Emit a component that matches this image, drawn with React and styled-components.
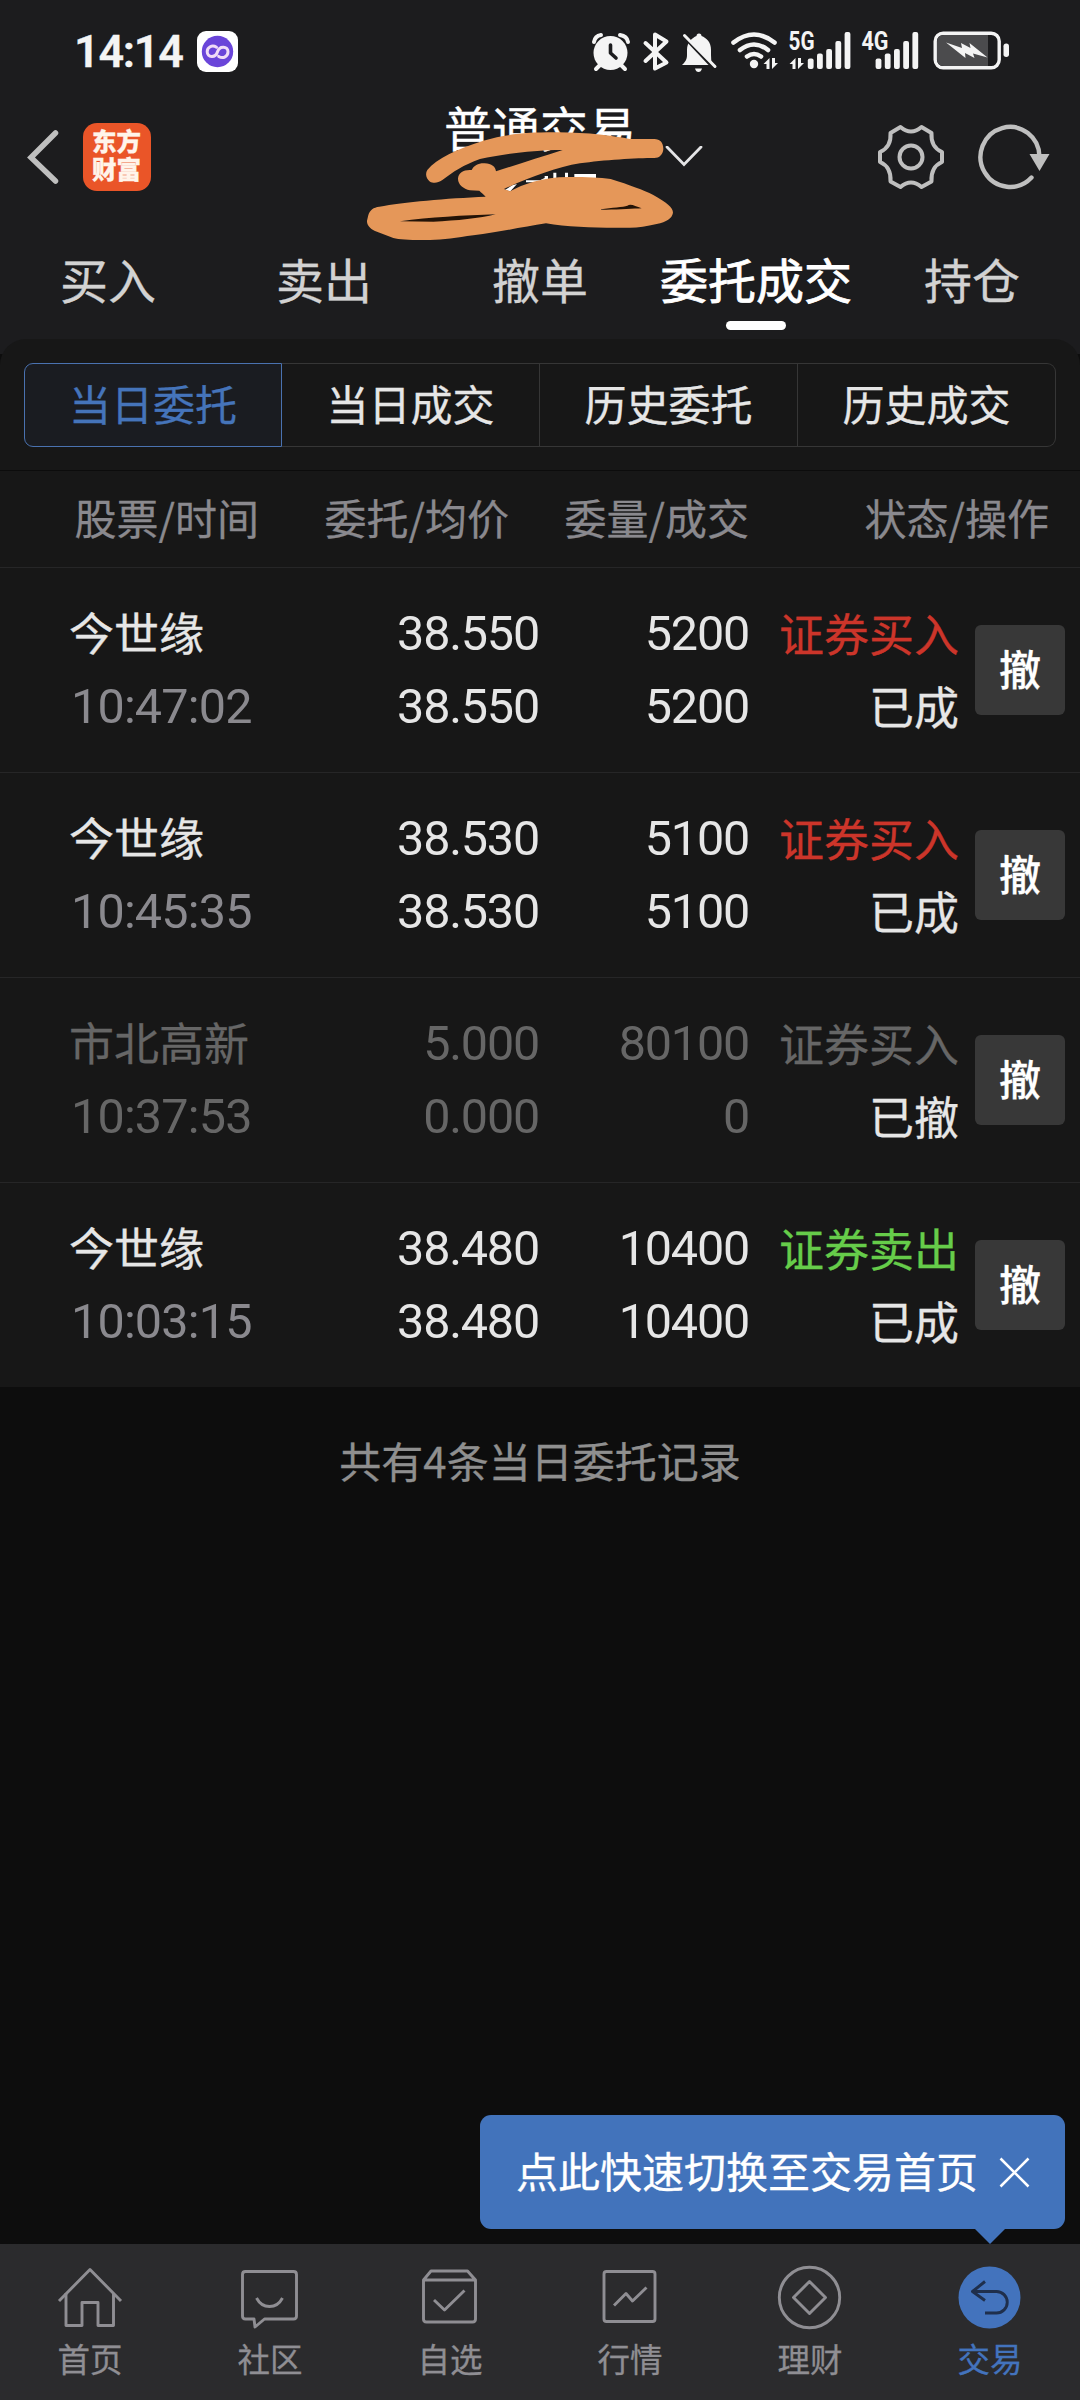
import React from "react";
import styled, { createGlobalStyle } from "styled-components";

const cjk = `"Noto Sans CJK SC", "Noto Sans", sans-serif`;
const latin = `Roboto, "Noto Sans CJK SC", sans-serif`;

const GlobalStyle = createGlobalStyle`
  *, *::before, *::after { box-sizing: border-box; }
  body { margin: 0; background: #0d0d0d; font-family: ${cjk}; -webkit-text-stroke: 0.3px; }
  button { border: 0; padding: 0; background: none; color: inherit; font: inherit; }
  svg { display: block; flex: none; }
`;

const Screen = styled.div`
  width: 1080px;
  height: 2400px;
  display: flex;
  flex-direction: column;
  background: #0d0d0d;
  overflow: hidden;
`;

const Top = styled.header`
  height: 354px;
  margin-bottom: -15px;
  background: #1c1c1e;
`;

const StatusBar = styled.div`
  height: 102px;
  padding: 0 71px 0 74px;
  display: flex;
  align-items: center;
  justify-content: space-between;
`;

const ClockGroup = styled.div`
  display: flex;
  align-items: center;
  gap: 11px;
`;

const Clock = styled.span`
  width: 112px;
  font: 600 45px/102px ${latin};
  letter-spacing: -1.3px;
  color: #f4f4f4;
  white-space: nowrap;
  padding-top: 1px;
`;

const TitleBar = styled.div`
  height: 110px;
  display: grid;
  grid-template-columns: 83px 354px 206px 1fr;
  align-items: center;
`;

const BackButton = styled.button`
  padding-left: 24px;
`;

const Logo = styled.div`
  width: 68px;
  height: 68px;
  padding: 4px 9px;
  border-radius: 14px;
  background: #ea5528;
  font: 900 24.5px/28px ${cjk};
  color: #fff4ea;
  word-break: break-all;
`;

const TitleBlock = styled.div`
  position: relative;
  height: 110px;
  padding-top: 6px;
`;

const Title = styled.h1`
  margin: 0;
  padding-left: 7px;
  font: 400 48px/36px ${cjk};
  color: #fff;
  white-space: nowrap;
`;

const Scribble = styled.svg`
  position: absolute;
  left: -97px;
  top: -12px;
`;

const Actions = styled.div`
  display: flex;
  align-items: center;
  justify-content: space-between;
  padding: 0 29px 0 22px;
`;

const ActionPair = styled.div`
  display: flex;
  gap: 32px;
`;

const Tabs = styled.nav`
  height: 127px;
  display: grid;
  grid-template-columns: repeat(5, 1fr);
`;

const Tab = styled.button`
  display: flex;
  flex-direction: column;
  align-items: center;
  font: 400 48px/70px ${cjk};
  -webkit-text-stroke: ${(p) => (p.$active ? "0.8px" : "0.3px")};
  color: ${(p) => (p.$active ? "#fff" : "#d2d2d2")};
  padding-top: 31px;

  &::after {
    content: "";
    width: 60px;
    height: 9px;
    margin-top: 8px;
    border-radius: 4.5px;
    background: ${(p) => (p.$active ? "#fff" : "transparent")};
  }
`;

const Panel = styled.main`
  background: #171717;
  border-radius: 26px 26px 0 0;
  padding-top: 24px;
`;

const Segments = styled.div`
  margin: 0 24px 23px;
  height: 84px;
  display: grid;
  grid-template-columns: repeat(4, 258px);
`;

const Segment = styled.button`
  border: 1px solid ${(p) => (p.$active ? "#4a72b0" : "#363636")};
  border-left-width: ${(p) => (p.$active ? 1 : 0)}px;
  border-radius: ${(p) => (p.$first ? "9px 0 0 9px" : p.$last ? "0 9px 9px 0" : "0")};
  background: ${(p) => (p.$active ? "#1a1c21" : "transparent")};
  color: ${(p) => (p.$active ? "#4574ba" : "#e6e6e6")};
  font: 400 42px/78px ${cjk};
  padding-bottom: 4px;
`;

const HeadRow = styled.div`
  height: 98px;
  border-top: 1px solid #0c0c0c;
  border-bottom: 1px solid #262627;
  padding: 0 31px 0 0;
  display: grid;
  grid-template-columns: 259px 250px 240px 1fr;
  font: 400 42px/91px ${cjk};
  color: #8a898e;
  text-align: right;
  white-space: nowrap;
`;

const Row = styled.section`
  height: ${(p) => (p.$last ? 204 : 205)}px;
  padding: 0 15px 0 69px;
  display: grid;
  grid-template-columns: 231px 239px 210px 210px 1fr;
  align-items: center;
  border-bottom: ${(p) => (p.$last ? 0 : 1)}px solid #262627;
  color: ${(p) => (p.$dim ? "#666" : "#e6e6e6")};
`;

const Cell = styled.div`
  display: flex;
  flex-direction: column;
  align-items: ${(p) => (p.$left ? "flex-start" : "flex-end")};
`;

const WordCell = styled(Cell)`
  margin-top: -3px;
`;

const Words = styled.span`
  font: 400 45px/73px ${cjk};
  color: ${(p) => p.$color || "inherit"};
  white-space: nowrap;
`;

const Digits = styled.span`
  font: 400 48.5px/73px ${latin};
  -webkit-text-stroke: 0;
  letter-spacing: -1.2px;
  white-space: nowrap;
`;

const Time = styled(Digits)`
  letter-spacing: -0.8px;
  padding: 2px 0 0 2px;
  color: ${(p) => (p.$dim ? "#666" : "#8a898e")};
`;

const CancelButton = styled.button`
  justify-self: end;
  width: 90px;
  height: 90px;
  border-radius: 6px;
  background: #383838;
  color: #fff;
  font: 500 42px/84px ${cjk};
  padding-bottom: 4px;
`;

const Summary = styled.p`
  flex: 1;
  margin: 0;
  padding-top: 41px;
  font: 400 42px/64px ${cjk};
  color: #8f8f8f;
  text-align: center;
`;

const BottomNav = styled.nav`
  position: relative;
  height: 156px;
  background: #2b2b2d;
  display: grid;
  grid-template-columns: repeat(6, 1fr);
`;

const NavItem = styled.button`
  display: flex;
  flex-direction: column;
  align-items: center;
  padding-top: 20px;
  font: 400 32.5px/48px ${cjk};
  color: ${(p) => (p.$active ? "#4373bd" : "#8f8e93")};

  span { margin-top: 4px; }
`;

const Tooltip = styled.div`
  position: absolute;
  right: 15px;
  bottom: 171px;
  width: 585px;
  height: 114px;
  padding: 0 35px 0 36px;
  border-radius: 11px;
  background: #4273bb;
  display: flex;
  align-items: center;
  justify-content: space-between;
  color: #fff;
  font: 400 42px/106px ${cjk};
  white-space: nowrap;

  span { margin-top: -5px; }

  &::after {
    content: "";
    position: absolute;
    right: 60px;
    top: 113.5px;
    border: 15px solid transparent;
    border-top-color: #4273bb;
    border-bottom-width: 0;
  }
`;

const bars = [58.5, 53.5, 49, 41, 32];

const Updown = ({ x }) => (
  <path d={`M${x} 64l6-6v11h-3v-5zM${x + 8.5} 58v11l6-6h-3v-5z`} fill="#f4f4f4" />
);

const StatusIcons = () => (
  <svg width="418" height="62" viewBox="591 20 418 62" fill="none">
    <g fill="#f4f4f4" stroke="#f4f4f4" strokeLinecap="round">
      <circle cx="610.5" cy="53" r="17" stroke="none" />
      <path d="M600 65l-4 4M621 65l4 4" strokeWidth="4" />
      <path d="M594 42q1-6 7-7M620 35q7 1 8 7" fill="none" strokeWidth="4" />
    </g>
    <path d="M610.5 45v8l5.500 5" stroke="#1c1c1e" strokeWidth="3.600" strokeLinecap="round" strokeLinejoin="round" />
    <path d="M645.500 43l21 19.500-11.500 6v-34l11.500 7-21 19.500" stroke="#f4f4f4" strokeWidth="4" strokeLinecap="round" strokeLinejoin="round" />
    <path d="M682 65c3-3 5-5 5-10v-5c0-8 5-12 9.500-14a2.500 2.500 0 0 1 5 0c5 2 9.500 6 9.500 14v5q0 6 1 10zM695 68.500h7q-1 3.500-3.500 3.500t-3.500-3.500z" fill="#f4f4f4" />
    <path d="M681 33l33 35" stroke="#1c1c1e" strokeWidth="4" />
    <path d="M684.500 35.500l30.500 31" stroke="#f4f4f4" strokeWidth="3" strokeLinecap="round" />
    <g stroke="#f4f4f4" strokeWidth="4.600" strokeLinecap="round">
      <path d="M733.500 42.500q20.500-16 41 0" />
      <path d="M740 50q14-11 28 0" />
      <path d="M747 56.500q7-5 14 0" />
    </g>
    <circle cx="754" cy="64" r="4.200" fill="#f4f4f4" />
    <Updown x={763.5} />
    <g fill="#f4f4f4" fontFamily="Roboto, sans-serif" fontWeight="700" fontSize="25">
      <text x="788.500" y="50" textLength="26" lengthAdjust="spacingAndGlyphs">5G</text>
      <text x="861.500" y="50" textLength="27" lengthAdjust="spacingAndGlyphs">4G</text>
    </g>
    <Updown x={789.5} />
    {[807.8, 875.6].map((start) =>
      bars.map((top, i) => (
        <rect key={`${start}-${i}`} x={start + i * 9.2} y={top} width="5.800" height={69 - top} rx="2" fill="#f4f4f4" />
      ))
    )}
    <rect x="935.200" y="33.200" width="64" height="34.600" rx="8" stroke="#f4f4f4" strokeWidth="3.400" />
    <path d="M944 35h44v31h-44q-7 0-7-7v-17q0-7 7-7z" fill="#4b4b4d" />
    <path d="M946 42.500l16 5.500-1-5 9.500 5-1-5 18 14.500-14.500-4 1.500 4.500-9.500-5 .5 5z" fill="#f4f4f4" />
    <rect x="1003.500" y="43.500" width="5.500" height="13.500" rx="2.700" fill="#f4f4f4" />
  </svg>
);

const AppBadge = () => (
  <svg width="41" height="41" viewBox="0 0 41 41" fill="none">
    <rect width="41" height="41" rx="9" fill="#fff" />
    <circle cx="20.500" cy="20.500" r="15.700" fill="#6a45d9" />
    <path d="M19.500 16.200c-4.500-2.800-9.300 0-9.300 4.600 0 5.700 8.300 6.700 10.300 0s10.500-5.700 10.500 0c0 4.600-4.800 7.400-9.300 4.600" stroke="#f0dcf7" strokeWidth="3" strokeLinecap="round" />
  </svg>
);

const BackIcon = () => (
  <svg width="38" height="56" viewBox="0 0 38 56" fill="none" stroke="#bfbfbf" strokeWidth="5.500" strokeLinecap="round" strokeLinejoin="miter">
    <path d="M31.500 4L7 28.500 31.500 52" />
  </svg>
);

const ChevronDown = () => (
  <svg width="38" height="22" viewBox="0 0 38 22" fill="none" stroke="#e4e4e6" strokeWidth="2.800" strokeLinecap="round">
    <path d="M2 1L19 18.500 36 1" />
  </svg>
);

const GearIcon = () => (
  <svg width="68" height="68" viewBox="876.500 123 68 68" fill="none" stroke="#bfbfbf" strokeWidth="4" strokeLinejoin="round">
    <path d="M900 127Q910.500 136 921 127L931 133Q930 147 941.500 152V162Q930 167 931 181.500L921 187Q910.500 178 900 187L890 181.500Q891 167 879.500 162V152Q891 147 890 133Z" />
    <circle cx="910.500" cy="157" r="11.500" />
  </svg>
);

const RefreshIcon = () => (
  <svg width="74" height="68" viewBox="978 123 74 68" fill="none">
    <path d="M1040.500 157A29.500 30 0 1 0 1032.500 177.500" stroke="#bfbfbf" strokeWidth="4.400" strokeLinecap="round" />
    <path d="M1030.500 154h20l-10 17z" fill="#bfbfbf" />
  </svg>
);

const ScribbleMark = () => (
  <Scribble width="380" height="160" viewBox="0 0 1140 480">
    <path fill="#fff" d="M495 300l22-14 14-4-20 22zM558 271h42l20-10-8 16h-54zM614 258h10v18h-10zM640 248h9v22h-9zM675 248h9v22h-9zM703 252h65v12h-65z" />
    <path fill="#231307" d="M170 400l140-35 170-5-90 40zM770 350l100-15 45 25-80 15z" />
    <path
      fill="#e59759"
      fillRule="evenodd"
      d="M262 240C290 205 350 178 430 152C500 132 560 127 640 127C740 126 820 138 870 147L943 147C960 147 970 158 970 177C969 194 958 204 943 204C890 204 790 210 720 220C650 231 570 262 492 297L510 304C550 282 610 260 690 261C740 261 780 263 812 267C870 285 910 300 940 315C980 338 999 352 999 368C996 386 980 395 950 402C920 409 895 413 870 413C790 414 690 413 618 400C550 411 480 425 400 436C350 443 310 450 270 450C220 451 180 449 160 444L105 423C88 416 80 403 81 392L85 375C90 360 100 352 118 350C190 336 320 325 437 320C430 312 424 308 418 302L390 301C370 296 354 284 354 266C355 248 372 238 395 240C402 226 416 219 434 220C455 220 467 231 468 244C530 224 600 202 668 180C570 180 490 193 420 207C370 225 340 245 306 271C294 280 279 280 270 275C258 267 255 251 262 240ZM180 394C270 382 370 376 467 373C420 385 350 392 280 395ZM783 358C815 352 850 352 862 347C872 340 885 348 905 355C880 356 830 360 783 359Z"
    />
  </Scribble>
);

const navIcons = {
  首页: (
    <>
      <path d="M59 2301L90 2269.500 121 2301" strokeLinecap="butt" />
      <path d="M66 2293V2325.500H82V2302.500H98V2325.500H113.500V2293" />
    </>
  ),
  社区: (
    <g transform="translate(-180 0)">
      <path d="M245 2271.500H293.500Q296.500 2271.500 296.500 2274.500V2316Q296.500 2319 293.500 2319H264.500L255 2327 254 2319H245.500Q242.500 2319 242.500 2316V2274.500Q242.500 2271.500 245.500 2271.500Z" />
      <path d="M256.500 2298Q261 2306.500 269.500 2306.500T282.500 2298" />
    </g>
  ),
  自选: (
    <g transform="translate(-360 0)">
      <path d="M423.500 2280L431 2271H467.500L475.500 2280V2319Q475.500 2322 472.500 2322H426.500Q423.500 2322 423.500 2319ZM423.500 2280H475.500" />
      <path d="M434 2300L444.500 2310 464.500 2290.500" />
    </g>
  ),
  行情: (
    <g transform="translate(-540 0)">
      <rect x="604" y="2271.500" width="51" height="50" rx="2.500" />
      <path d="M614 2305.500L626 2293.500 632.500 2301 646.500 2287.500" />
    </g>
  ),
  理财: (
    <g transform="translate(-720 0)">
      <circle cx="809.500" cy="2297.500" r="30.200" />
      <path d="M809.500 2281.500L825.500 2297.500 809.500 2313.500 793.500 2297.500Z" />
    </g>
  ),
  交易: (
    <g transform="translate(-900 0)">
      <circle cx="989.500" cy="2297.500" r="31" fill="#4373bd" stroke="none" />
      <path d="M985 2281.500L972.500 2291.500 985 2300.500M972.500 2291.500H996.500A10.500 10.500 0 0 1 996.500 2313H985" stroke="#1f2f4c" strokeLinecap="butt" />
    </g>
  ),
};

const NavIcon = ({ name }) => (
  <svg width="68" height="66" viewBox="56 2264 68 66" fill="none" stroke="#8f8e93" strokeWidth="2.900" strokeLinejoin="round">
    {navIcons[name]}
  </svg>
);

const CloseIcon = () => (
  <svg width="31" height="31" viewBox="0 0 31 31" stroke="#fff" strokeWidth="2.600">
    <path d="M1.500 1.500l28 28M29.500 1.500l-28 28" />
  </svg>
);

const orders = [
  { name: "今世缘", time: "10:47:02", price: "38.550", average: "38.550", amount: "5200", filled: "5200", side: "证券买入", color: "#cc352a", state: "已成" },
  { name: "今世缘", time: "10:45:35", price: "38.530", average: "38.530", amount: "5100", filled: "5100", side: "证券买入", color: "#cc352a", state: "已成" },
  { name: "市北高新", time: "10:37:53", price: "5.000", average: "0.000", amount: "80100", filled: "0", side: "证券买入", color: "#666", state: "已撤", dim: true },
  { name: "今世缘", time: "10:03:15", price: "38.480", average: "38.480", amount: "10400", filled: "10400", side: "证券卖出", color: "#66cc4a", state: "已成" },
];

const segments = ["当日委托", "当日成交", "历史委托", "历史成交"];

export default function App() {
  return (
    <Screen>
      <GlobalStyle />
      <Top>
        <StatusBar>
          <ClockGroup>
            <Clock>14:14</Clock>
            <AppBadge />
          </ClockGroup>
          <StatusIcons />
        </StatusBar>
        <TitleBar>
          <BackButton><BackIcon /></BackButton>
          <Logo>东方财富</Logo>
          <TitleBlock>
            <Title>普通交易</Title>
            <ScribbleMark />
          </TitleBlock>
          <Actions>
            <ChevronDown />
            <ActionPair><GearIcon /><RefreshIcon /></ActionPair>
          </Actions>
        </TitleBar>
        <Tabs>
          {["买入", "卖出", "撤单", "委托成交", "持仓"].map((label) => (
            <Tab key={label} $active={label === "委托成交"}>{label}</Tab>
          ))}
        </Tabs>
      </Top>
      <Panel>
        <Segments>
          {segments.map((label, i) => (
            <Segment key={label} $active={i === 0} $first={i === 0} $last={i === 3}>{label}</Segment>
          ))}
        </Segments>
        <HeadRow>
          <span>股票/时间</span>
          <span>委托/均价</span>
          <span>委量/成交</span>
          <span>状态/操作</span>
        </HeadRow>
        {orders.map((o, i) => (
          <Row key={o.time} $dim={o.dim} $last={i === orders.length - 1}>
            <WordCell $left>
              <Words>{o.name}</Words>
              <Time $dim={o.dim}>{o.time}</Time>
            </WordCell>
            <Cell>
              <Digits>{o.price}</Digits>
              <Digits>{o.average}</Digits>
            </Cell>
            <Cell>
              <Digits>{o.amount}</Digits>
              <Digits>{o.filled}</Digits>
            </Cell>
            <WordCell>
              <Words $color={o.color}>{o.side}</Words>
              <Words $color="#e6e6e6">{o.state}</Words>
            </WordCell>
            <CancelButton>撤</CancelButton>
          </Row>
        ))}
      </Panel>
      <Summary>共有4条当日委托记录</Summary>
      <BottomNav>
        {Object.keys(navIcons).map((name) => (
          <NavItem key={name} $active={name === "交易"}>
            <NavIcon name={name} />
            <span>{name}</span>
          </NavItem>
        ))}
        <Tooltip>
          <span>点此快速切换至交易首页</span>
          <CloseIcon />
        </Tooltip>
      </BottomNav>
    </Screen>
  );
}
